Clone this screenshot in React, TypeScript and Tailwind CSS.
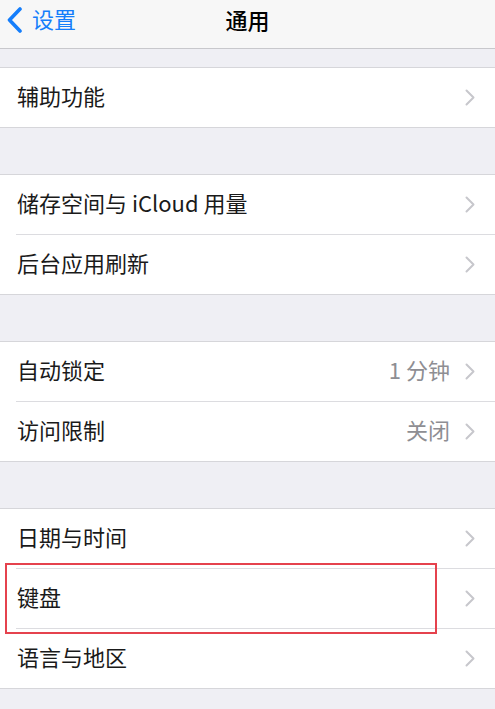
import { Fragment } from 'react'

type Row = { label: string; value?: string }

const groups: Row[][] = [
  [{ label: '辅助功能' }],
  [{ label: '储存空间与 iCloud 用量' }, { label: '后台应用刷新' }],
  [
    { label: '自动锁定', value: '1 分钟' },
    { label: '访问限制', value: '关闭' },
  ],
  [{ label: '日期与时间' }, { label: '键盘' }, { label: '语言与地区' }],
]

function Chevron() {
  return (
    <svg width="10" height="17" viewBox="0 0 10 17" fill="none" className="shrink-0">
      <path d="M1.5 1.5 L8.5 8.5 L1.5 15.5" stroke="#c7c7cc" strokeWidth="2" strokeLinecap="round" strokeLinejoin="round" />
    </svg>
  )
}

function BackChevron() {
  return (
    <svg width="16" height="26" viewBox="0 0 16 26" fill="none" className="shrink-0">
      <path d="M13 2 L2.5 13 L13 24" stroke="#157efb" strokeWidth="3.6" strokeLinecap="round" strokeLinejoin="round" />
    </svg>
  )
}

export default function App() {
  return (
    <div
      className="relative w-[495px] h-[709px] overflow-hidden bg-[#efeff4]"
      style={{ fontFamily: '"Noto Sans CJK SC", "Noto Sans", sans-serif' }}
    >
      {/* Nav Bar */}
      <div className="relative h-[49px] bg-[#f7f7f7] border-b border-[#c8c8cc] flex items-start pt-[7px]">
        <div className="flex items-center gap-[9px] pl-[7px] text-[22px] text-[#157efb] leading-none">
          <BackChevron />
          <span className="-translate-y-[2px]">设置</span>
        </div>
        <div className="absolute left-0 right-0 top-[8px] text-center text-[22px] font-medium text-black leading-none pointer-events-none">
          通用
        </div>
      </div>

      {/* Groups */}
      <div className="flex flex-col gap-[46px] pt-[18px]">
        {groups.map((rows, gi) => (
          <div key={gi} className="bg-white border-y border-[#d6d6da]">
            {rows.map((row, ri) => (
              <Fragment key={row.label}>
                {ri > 0 && <div className="ml-[16px] h-px bg-[#dcdce0]" />}
                <div className="h-[59px] flex items-center justify-between pl-[17px] pr-[20px]">
                  <span className="text-[22px] text-[#1a1a1a] leading-none -translate-y-[3px]">{row.label}</span>
                  <div className="flex items-center gap-[15px]">
                    {row.value && (
                      <span className="text-[22px] text-[#8e8e93] leading-none -translate-y-[3px]">{row.value}</span>
                    )}
                    <Chevron />
                  </div>
                </div>
              </Fragment>
            ))}
          </div>
        ))}
      </div>

      {/* Highlight box */}
      <div className="absolute left-[5px] top-[563px] w-[432px] h-[71px] border-[2.5px] border-[#e5424d]" />
    </div>
  )
}
